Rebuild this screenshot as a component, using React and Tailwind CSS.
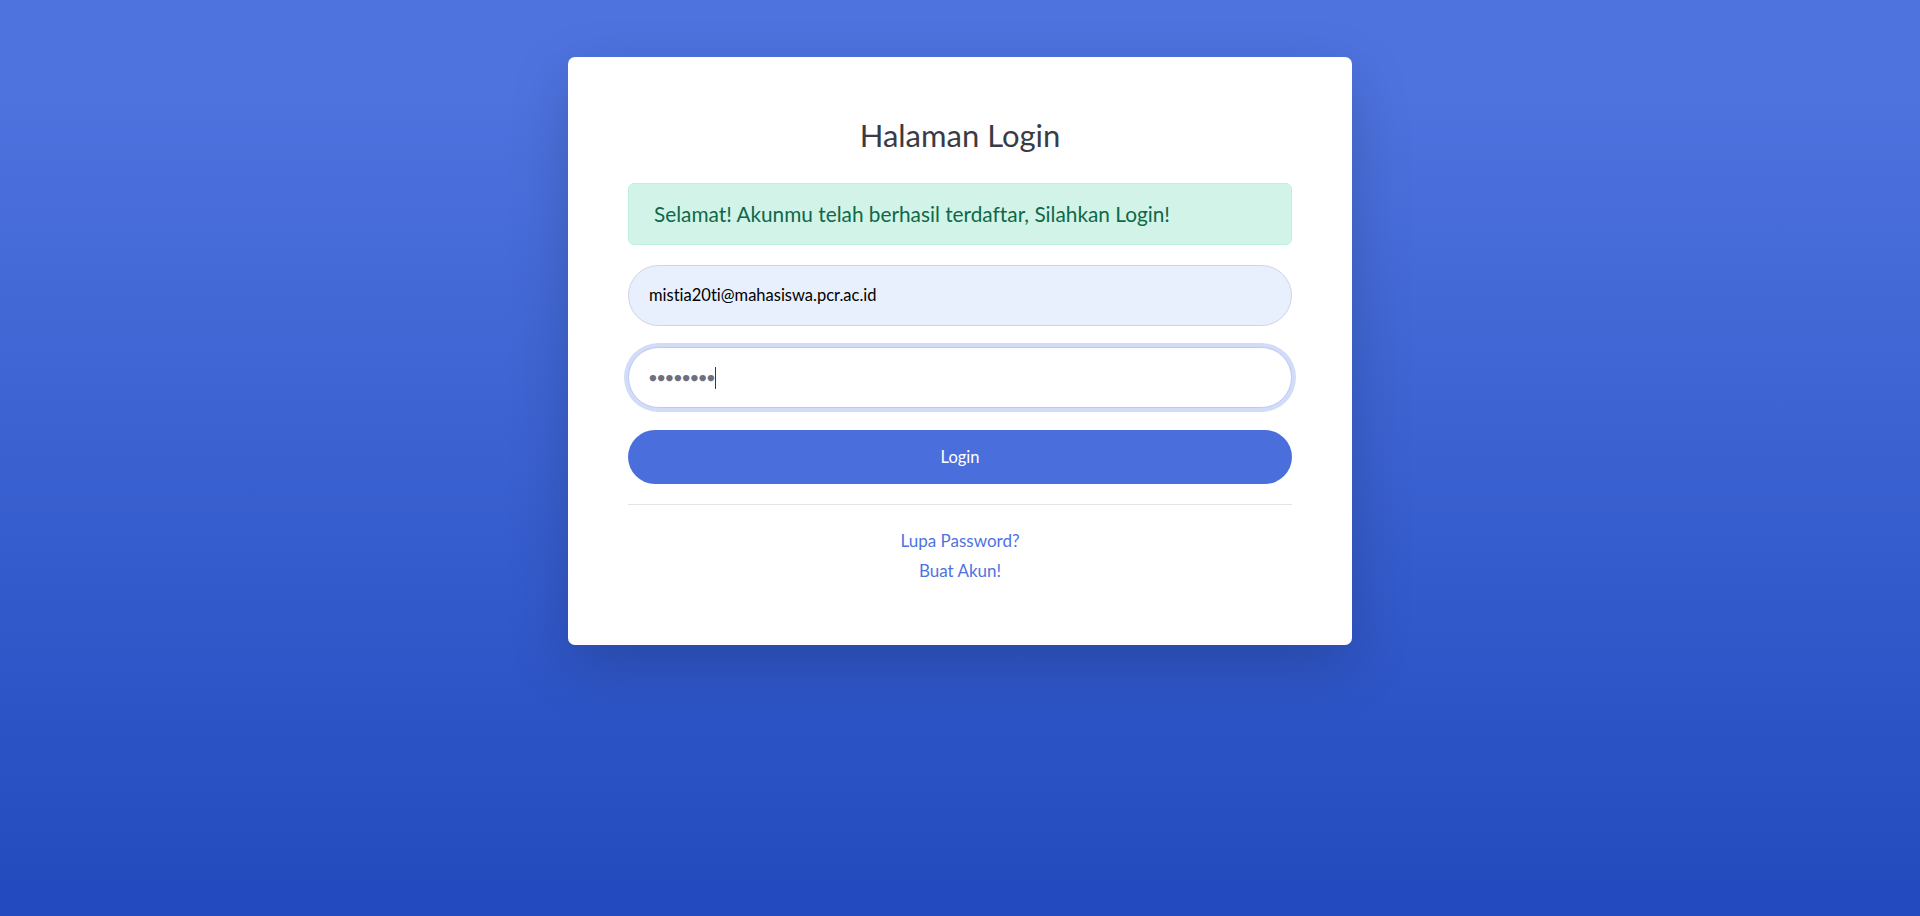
import React from "react";

export default function App() {
  const font = { fontFamily: "Lato, 'Noto Sans', sans-serif" };
  return (
    <div
      className="min-h-screen w-full flex justify-center pt-[57px] bg-[linear-gradient(180deg,#4e73df_10%,#224abe_100%)] [font-variant-ligatures:none]"
      style={font}
    >
      <div className="w-[784px] h-[588px] bg-white rounded-[7px] shadow-[0_20px_60px_rgba(0,0,0,0.175)] px-[60px] pt-[60px] self-start">
        <h1 className="text-[31px] leading-[36px] text-[#3a3b45] text-center font-normal mb-[30px]">
          Halaman Login
        </h1>
        <div className="h-[62px] rounded-[6px] border border-[#bff0de] bg-[#d2f4e8] text-[#0f6848] text-[20.8px] leading-[30px] px-[25px] py-[15px] mb-[20px]">
          Selamat! Akunmu telah berhasil terdaftar, Silahkan Login!
        </div>
        <div className="h-[61px] rounded-full border border-[#d1d3e2] bg-[#e8f0fe] text-black text-[16.5px] flex items-center px-[20px] mb-[21px]">
          mistia20ti@mahasiswa.pcr.ac.id
        </div>
        <div className="h-[61px] rounded-full border border-[#bac8f3] bg-white shadow-[0_0_0_4px_rgba(78,115,223,0.25)] text-[#6e707e] flex items-center px-[20px] mb-[22px]">
          <span className="text-[13px] tracking-[0.5px]">●●●●●●●●</span>
          <span className="w-px h-[22px] bg-[#3a3b45]"></span>
        </div>
        <button className="w-full h-[54px] rounded-full bg-[#4a6fdc] text-white text-[16.5px] flex items-center justify-center mb-[20px]">
          Login
        </button>
        <hr className="border-0 border-t border-[rgba(0,0,0,0.1)] mb-[21px]" />
        <div className="text-center text-[17px] leading-[30px]">
          <a className="text-[#4e73df]" href="#">Lupa Password?</a>
        </div>
        <div className="text-center text-[17px] leading-[30px]">
          <a className="text-[#4e73df]" href="#">Buat Akun!</a>
        </div>
      </div>
    </div>
  );
}
